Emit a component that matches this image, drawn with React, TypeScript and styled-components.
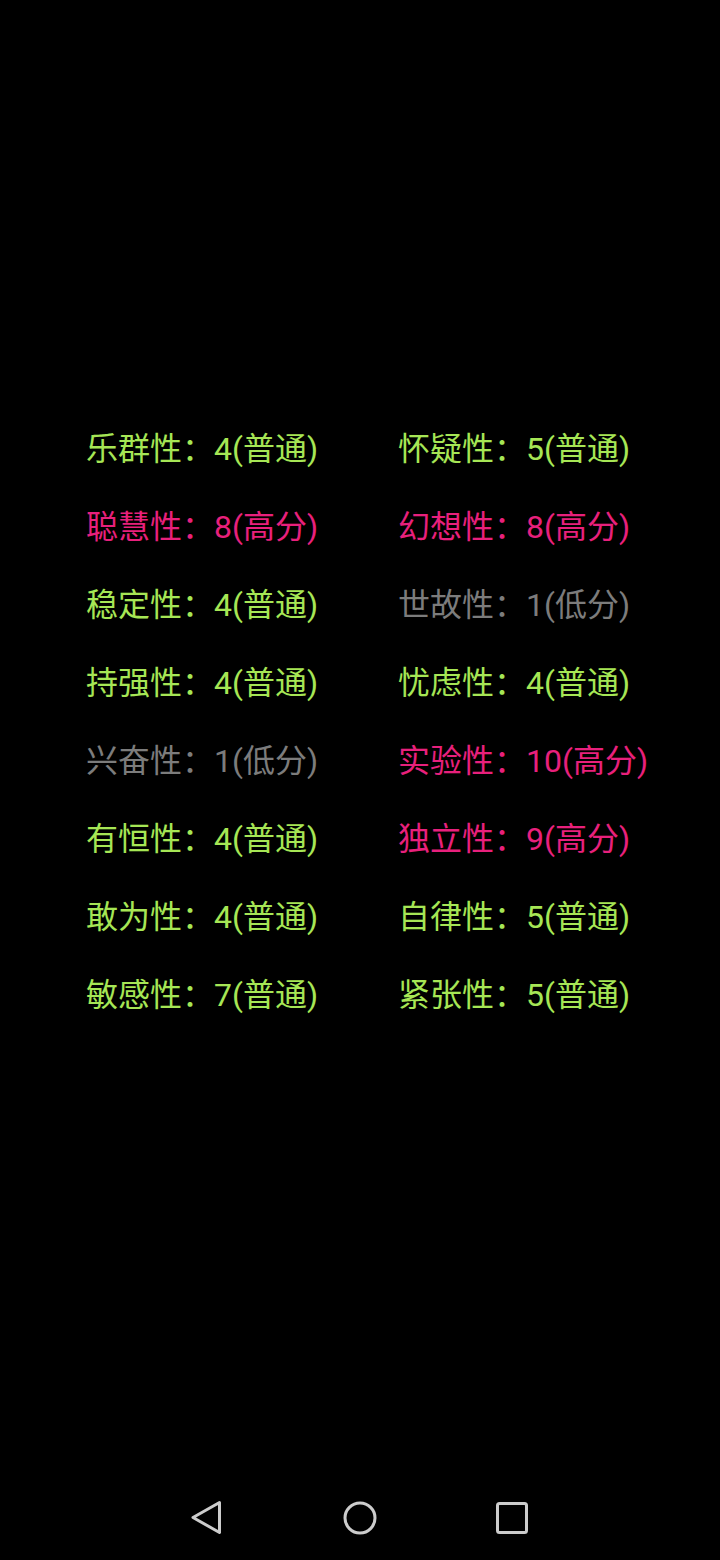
import React from "react";
import styled, { createGlobalStyle } from "styled-components";

const Global = createGlobalStyle`
  html, body { margin: 0; padding: 0; background: #000; }
  body { font-family: Roboto, "Noto Sans CJK SC", sans-serif; }
`;

const Screen = styled.div`
  width: 720px;
  height: 1560px;
  background: #000;
  display: flex;
  flex-direction: column;
  overflow: hidden;
`;

const Grid = styled.div`
  margin-top: 407px;
  padding-left: 86px;
  display: grid;
  grid-template-columns: 312px 312px;
  grid-auto-rows: 78px;
`;

type Level = "normal" | "high" | "low";

const colors: Record<Level, string> = {
  normal: "#a6e655",
  high: "#e8207c",
  low: "#7c7c7c",
};

const Item = styled.div<{ $level: Level }>`
  display: flex;
  align-items: center;
  font-family: Roboto, "Noto Sans CJK SC", sans-serif;
  font-size: 32px;
  white-space: nowrap;
  color: ${(p) => colors[p.$level]};
`;

const Spacer = styled.div`
  flex: 1;
`;

const NavBar = styled.div`
  height: 80px;
  display: flex;
  align-items: center;
  justify-content: center;
  margin-bottom: 2px;
`;

const NavButton = styled.div`
  width: 152px;
  display: flex;
  justify-content: center;
  align-items: center;
`;

const data: [string, string, Level][] = [
  ["乐群性", "4(普通)", "normal"],
  ["怀疑性", "5(普通)", "normal"],
  ["聪慧性", "8(高分)", "high"],
  ["幻想性", "8(高分)", "high"],
  ["稳定性", "4(普通)", "normal"],
  ["世故性", "1(低分)", "low"],
  ["持强性", "4(普通)", "normal"],
  ["忧虑性", "4(普通)", "normal"],
  ["兴奋性", "1(低分)", "low"],
  ["实验性", "10(高分)", "high"],
  ["有恒性", "4(普通)", "normal"],
  ["独立性", "9(高分)", "high"],
  ["敢为性", "4(普通)", "normal"],
  ["自律性", "5(普通)", "normal"],
  ["敏感性", "7(普通)", "normal"],
  ["紧张性", "5(普通)", "normal"],
];

export default function App() {
  return (
    <Screen>
      <Global />
      <Grid>
        {data.map(([name, val, lvl]) => (
          <Item key={name} $level={lvl}>
            {name}：{val}
          </Item>
        ))}
      </Grid>
      <Spacer />
      <NavBar>
        <NavButton>
          <svg width="36" height="36" viewBox="0 0 36 36">
            <path d="M29.5 2.5 L3 17.5 L29.5 32.5 Z" fill="none" stroke="#cccccc" strokeWidth="3" strokeLinejoin="round" />
          </svg>
        </NavButton>
        <NavButton>
          <svg width="36" height="36" viewBox="0 0 36 36">
            <circle cx="18" cy="18" r="15" fill="none" stroke="#cccccc" strokeWidth="3" />
          </svg>
        </NavButton>
        <NavButton>
          <svg width="36" height="36" viewBox="0 0 36 36">
            <rect x="3.5" y="3.5" width="29" height="29" rx="2" fill="none" stroke="#cccccc" strokeWidth="3" />
          </svg>
        </NavButton>
      </NavBar>
    </Screen>
  );
}
